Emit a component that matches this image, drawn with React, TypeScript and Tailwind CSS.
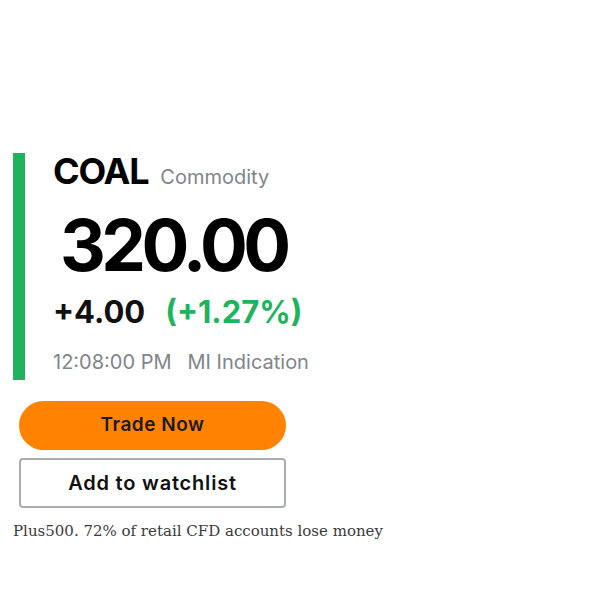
export default function App() {
  return (
    <div className="w-[600px] h-[600px] bg-white font-['Inter',sans-serif] pt-[153px]">
      <div className="flex pl-[13px]">
        <div className="w-[12px] h-[227px] bg-[#20b35d]" />
        <div className="pl-[28px]">
          <div className="flex items-baseline gap-[12px] mt-[-9px]">
            <span className="text-[36px] font-bold text-black tracking-[-1.2px]">COAL</span>
            <span className="text-[20px] text-[#80858b]">Commodity</span>
          </div>
          <div className="text-[71px] font-bold leading-none text-black tracking-[-4.5px] ml-[7px] mt-[12px]">
            320.00
          </div>
          <div className="flex items-baseline gap-[20px] mt-[8px] text-[31px] font-bold">
            <span className="text-[#111]">+4.00</span>
            <span className="text-[#20b35d]">(+1.27%)</span>
          </div>
          <div className="flex gap-[16px] mt-[11px] text-[20px] text-[#80858b]">
            <span>12:08:00 PM</span>
            <span>MI Indication</span>
          </div>
        </div>
      </div>
      <div className="pl-[19px] mt-[21px] flex flex-col gap-[8px] w-[306px]">
        <button className="h-[49px] w-[267px] rounded-full bg-[#ff8200] text-[19px] font-semibold text-[#1b1b1b] tracking-[0.5px]">
          Trade Now
        </button>
        <button className="h-[50px] w-[267px] rounded-[4px] border-2 border-[#a8aeb4] bg-white text-[20px] font-semibold text-[#111] tracking-[0.8px]">
          Add to watchlist
        </button>
      </div>
      <p className="pl-[13px] mt-[12px] font-['DejaVu_Serif',serif] text-[15px] text-[#3a3a3a]">
        Plus500. 72% of retail CFD accounts lose money
      </p>
    </div>
  );
}
